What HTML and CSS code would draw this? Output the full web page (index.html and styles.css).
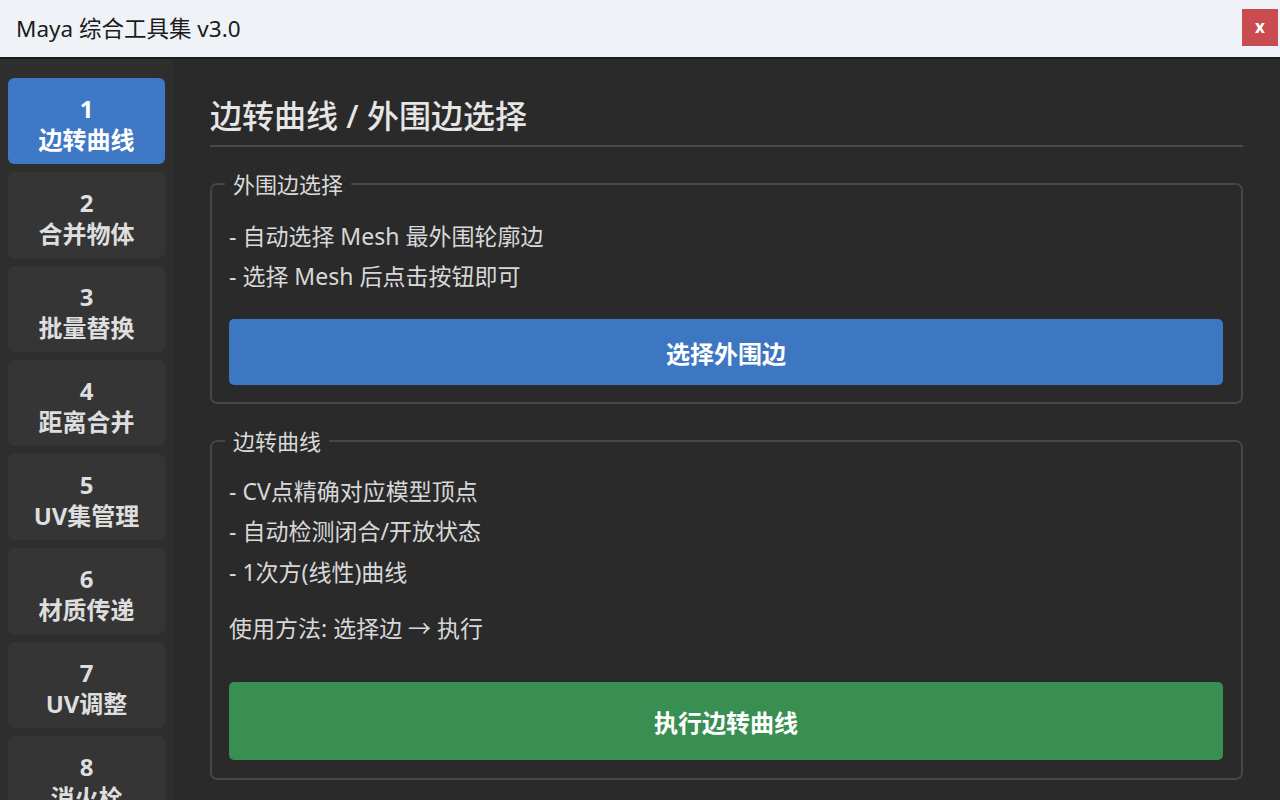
FILE: index.html
```html
<!DOCTYPE html>
<html lang="zh-CN">
<head>
<meta charset="utf-8">
<title>Maya 综合工具集 v3.0</title>
<link rel="stylesheet" href="styles.css">
</head>
<body>
<div class="window">
  <header class="titlebar">
    <span class="title">Maya 综合工具集 v3.0</span>
    <button class="close">x</button>
  </header>
  <div class="body">
    <nav class="sidebar">
      <div class="nav-item active"><span>1</span><span>边转曲线</span></div>
      <div class="nav-item"><span>2</span><span>合并物体</span></div>
      <div class="nav-item"><span>3</span><span>批量替换</span></div>
      <div class="nav-item"><span>4</span><span>距离合并</span></div>
      <div class="nav-item"><span>5</span><span>UV集管理</span></div>
      <div class="nav-item"><span>6</span><span>材质传递</span></div>
      <div class="nav-item"><span>7</span><span>UV调整</span></div>
      <div class="nav-item"><span>8</span><span>消火栓</span></div>
    </nav>
    <main class="main">
      <h1 class="page-title">边转曲线 / 外围边选择</h1>
      <fieldset class="group g1">
        <legend>外围边选择</legend>
        <p class="line">- 自动选择 Mesh 最外围轮廓边</p>
        <p class="line">- 选择 Mesh 后点击按钮即可</p>
        <button class="btn btn-blue">选择外围边</button>
      </fieldset>
      <fieldset class="group g2">
        <legend>边转曲线</legend>
        <p class="line">- CV点精确对应模型顶点</p>
        <p class="line">- 自动检测闭合/开放状态</p>
        <p class="line">- 1次方(线性)曲线</p>
        <p class="line usage">使用方法: 选择边 → 执行</p>
        <button class="btn btn-green">执行边转曲线</button>
      </fieldset>
    </main>
  </div>
</div>
</body>
</html>
```

FILE: styles.css
```css
* { box-sizing: border-box; }
html, body { margin: 0; padding: 0; height: 100%; overflow: hidden; }
body {
  font-family: "Noto Sans", "Noto Sans CJK SC", sans-serif;
  background: #2a2a2a;
  color: #d8d8d8;
}
.window { display: flex; flex-direction: column; height: 100vh; }
.titlebar {
  height: 59px;
  flex: none;
  background: #eff2f7;
  border-bottom: 2px solid #1c1c1c;
  display: flex;
  align-items: center;
  justify-content: space-between;
  padding: 0 2px 2px 16px;
}
.title { font-size: 22.5px; color: #1b1b1b; }
.close {
  width: 36px; height: 37px;
  border: none; border-radius: 0;
  background: #c94d50;
  color: #fff;
  font-family: "Noto Sans", sans-serif;
  font-weight: 700;
  font-size: 17px;
  line-height: 1;
  padding: 0 0 3px;
  margin-top: 0;
}
.body { flex: 1; display: flex; min-height: 0; }
.sidebar {
  width: 173px; flex: none;
  background: #2e2e2e;
  padding: 19px 8px;
  display: flex; flex-direction: column; gap: 8px;
  overflow: hidden;
}
.nav-item {
  flex: none;
  height: 86px;
  border-radius: 6px;
  background: #353535;
  color: #dedede;
  display: flex; flex-direction: column; align-items: center;
  padding-top: 15px;
  font-weight: 700;
  font-size: 24px;
  line-height: 31px;
}
.nav-item.active { background: #3f78c4; color: #fff; }
.main {
  flex: 1;
  padding: 0 37px 0 37px;
  overflow: hidden;
}
.page-title {
  margin: 37px 0 0;
  font-size: 32px;
  font-weight: 500;
  line-height: 40px;
  color: #e6e6e6;
  padding-bottom: 9px;
  border-bottom: 2px solid #4a4a4a;
}
.group {
  margin: 22px 0 0;
  border: 2px solid #464646;
  border-radius: 7px;
  padding: 17px 18px 17px 17px;
}
.g2 { margin-top: 22px; padding-top: 15px; padding-bottom: 18px; }
.group legend {
  font-size: 22px;
  line-height: 30px;
  padding: 0 8px;
  margin-left: -4px;
  color: #dadada;
}
.line {
  margin: 0;
  font-size: 23px;
  line-height: 40px;
  color: #d8d8d8;
}
.g2 .line:nth-of-type(3) { margin-top: 1px; }
.usage { margin-top: 16px; }
.btn {
  display: block;
  width: 100%;
  border: none;
  border-radius: 5px;
  color: #fff;
  font-family: "Noto Sans", "Noto Sans CJK SC", sans-serif;
  font-weight: 700;
  font-size: 24px;
}
.btn-blue { background: #3d76c1; height: 66px; margin-top: 23px; }
.btn-green { background: #398f51; height: 78px; margin-top: 34px; }
```
